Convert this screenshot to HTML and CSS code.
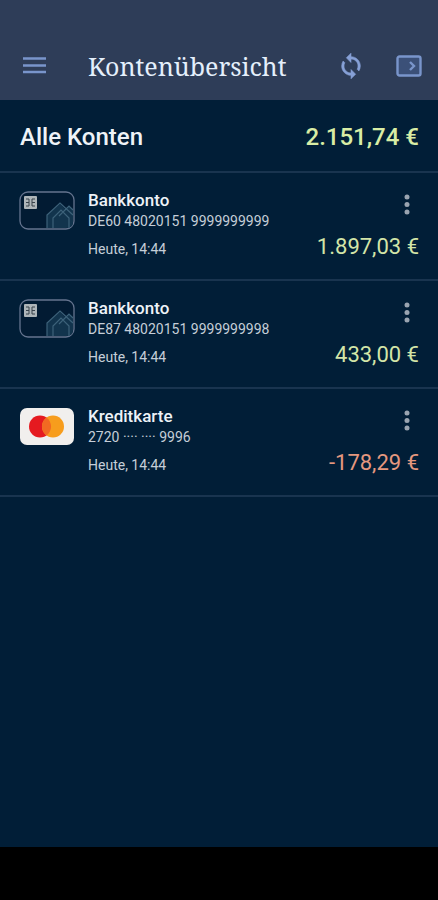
FILE: index.html
```html
<!DOCTYPE html>
<html lang="de">
<head>
<meta charset="utf-8">
<meta name="viewport" content="width=device-width, initial-scale=1">
<title>Kontenübersicht</title>
<link rel="stylesheet" href="styles.css">
</head>
<body>
<svg class="defs" width="0" height="0" aria-hidden="true">
  <symbol id="bank-card" viewBox="0 0 56 40">
    <rect x="1" y="1" width="54" height="37" rx="8" fill="#021b33" stroke="#65748f" stroke-width="1.3"/>
    <path d="M28 37V24L41 13l5 5 4-3 4 3v13q0 6-7 6z" fill="#12344d"/>
    <path d="M28 37V24L41 12l13 12M34 37V27l8-8 8 8v10M40 25l10-10 4 4" fill="none" stroke="#3d627a" stroke-width="1.2"/>
    <rect x="5" y="5" width="13" height="13" rx="1" fill="#aeb5b9"/>
    <path d="M7 8h3v7H7M16 8h-3v7h3M7 11.500h3M13 11.500h3" fill="none" stroke="#38424b"/>
  </symbol>
  <symbol id="dots" viewBox="0 0 8 24">
    <circle cx="4" cy="4" r="2.5"/><circle cx="4" cy="11.500" r="2.5"/><circle cx="4" cy="19" r="2.5"/>
  </symbol>
</svg>
<div class="app">
  <header class="bar">
    <button class="icon-button" type="button" aria-label="Menü">
      <svg width="24" height="24" viewBox="0 0 24 24"><path d="M0 4.5h23M0 11.5h23M0 18h23" stroke="#7995cb" stroke-width="2.6"/></svg>
    </button>
    <h1 class="title">Kontenübersicht</h1>
    <button class="icon-button" type="button" aria-label="Aktualisieren">
      <svg width="28" height="28" viewBox="0 0 24 24" fill="#86a0d6" stroke="#86a0d6" stroke-width=".5"><path d="M12 4V1L8 5l4 4V6c3.31 0 6 2.69 6 6 0 1.01-.25 1.97-.7 2.8l1.46 1.46A7.93 7.93 0 0 0 20 12c0-4.42-3.58-8-8-8zm0 14c-3.31 0-6-2.69-6-6 0-1.01.25-1.97.7-2.8L5.24 7.74A7.93 7.93 0 0 0 4 12c0 4.42 3.58 8 8 8v3l4-4-4-4z"/></svg>
    </button>
    <button class="icon-button" type="button" aria-label="Abmelden">
      <svg width="26" height="22" viewBox="0 0 26 22" fill="none" stroke="#7995cb"><rect x="1.5" y="1.5" width="23" height="19" rx="2" fill="#3b5078" stroke-width="2.4"/><path d="M14 7l4 4-4 4" stroke-width="2.4"/></svg>
    </button>
  </header>
  <main class="content">
    <section class="summary">
      <h2 class="summary-label">Alle Konten</h2>
      <span class="summary-amount">2.151,74 €</span>
    </section>
    <ul class="accounts">
      <li class="account">
        <svg class="card" viewBox="0 0 56 40"><use href="#bank-card"/></svg>
        <div class="details">
          <h3 class="name">Bankkonto</h3>
          <p class="number">DE60 48020151 9999999999</p>
          <p class="time">Heute, 14:44</p>
        </div>
        <div class="side">
          <button class="more" type="button" aria-label="Optionen"><svg width="8" height="24"><use href="#dots"/></svg></button>
          <span class="amount">1.897,03 €</span>
        </div>
      </li>
      <li class="account">
        <svg class="card" viewBox="0 0 56 40"><use href="#bank-card"/></svg>
        <div class="details">
          <h3 class="name">Bankkonto</h3>
          <p class="number">DE87 48020151 9999999998</p>
          <p class="time">Heute, 14:44</p>
        </div>
        <div class="side">
          <button class="more" type="button" aria-label="Optionen"><svg width="8" height="24"><use href="#dots"/></svg></button>
          <span class="amount">433,00 €</span>
        </div>
      </li>
      <li class="account">
        <svg class="card" viewBox="0 0 56 40"><rect x="1" y="1" width="54" height="37" rx="7" fill="#f1efed"/><circle cx="21" cy="19.500" r="11" fill="#e51a20"/><circle cx="34" cy="19.500" r="11" fill="#f79d1d"/><path d="M27.500 10.600a11 11 0 0 1 0 17.800a11 11 0 0 1 0-17.800z" fill="#f26a22"/></svg>
        <div class="details">
          <h3 class="name">Kreditkarte</h3>
          <p class="number">2720 ···· ···· 9996</p>
          <p class="time">Heute, 14:44</p>
        </div>
        <div class="side">
          <button class="more" type="button" aria-label="Optionen"><svg width="8" height="24"><use href="#dots"/></svg></button>
          <span class="amount negative">-178,29 €</span>
        </div>
      </li>
    </ul>
  </main>
  <footer class="system-bar"></footer>
</div>
</body>
</html>
```
FILE: styles.css
```css
* { box-sizing: border-box; }
body { margin: 0; background: #011e37; color: #eef3f8; font-family: Roboto, "Liberation Sans", sans-serif; }
h1, h2, h3, p, ul { margin: 0; padding: 0; }
button { padding: 0; border: 0; background: none; cursor: pointer; }
svg { display: block; }
.defs { position: absolute; }
.app { display: flex; flex-direction: column; min-height: 100vh; }
.bar { display: flex; align-items: center; height: 100px; padding: 32px 16px 0 19px; background: #2e3d58; }
.icon-button { display: grid; place-items: center; width: 32px; height: 32px; flex: none; }
.title { flex: 1; margin-left: 37px; color: #e4effb; font-family: "Noto Serif", "Droid Serif", "DejaVu Serif", serif; font-size: 25px; font-weight: 400; line-height: 32px; }
.icon-button + .icon-button { margin-left: 26px; margin-right: -3px; }
.content { flex: 1; }
.summary { display: flex; align-items: center; justify-content: space-between; height: 73px; padding: 2px 19px 0 20px; border-bottom: 2px solid #19344f; }
.summary-label { font-size: 24px; font-weight: 500; }
.summary-amount { color: #d9eda5; font-size: 24px; font-weight: 500; }
.accounts { list-style: none; }
.account { display: flex; height: 108px; padding: 16px 19px 0; border-bottom: 2px solid #19344f; }
.card { flex: none; width: 56px; height: 40px; margin-top: 2px; }
.details { flex: 1; margin-left: 13px; }
.name { font-size: 17px; font-weight: 500; line-height: 22px; }
.number { color: #c5ced8; font-size: 14px; line-height: 20px; }
.time { margin-top: 8px; color: #c5ced8; font-size: 14px; line-height: 20px; }
.side { display: flex; flex-direction: column; align-items: flex-end; }
.more { width: 24px; height: 32px; display: grid; place-items: center; fill: #9aa4b0; }
.amount { margin-top: 12px; color: #d3e5a8; font-size: 22px; line-height: 28px; white-space: nowrap; }
.negative { color: #e5987f; }
.system-bar { height: 53px; background: #000; }
```
